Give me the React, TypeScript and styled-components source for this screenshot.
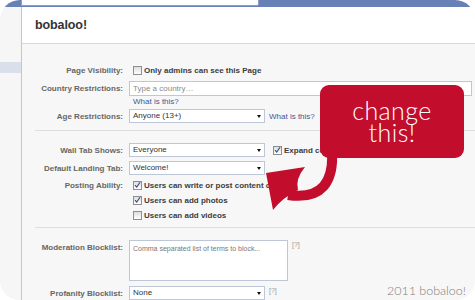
import React from 'react'
import styled, { createGlobalStyle } from 'styled-components'

const GlobalStyle = createGlobalStyle`
    body {
        margin: 0;
        background: #ffffff;
        font-family: "Liberation Sans", Arial, sans-serif;
    }
`;

const Frame = styled.div`
    position: relative;
    width: 475px;
    height: 300px;
    border-radius: 20px;
    overflow: hidden;
    background: #f7f7f7;
`;

const TopBar = styled.div`
    height: 7px;
    background: #6780b6;
    padding-left: 21px;
    display: flex;
`;

const SearchBox = styled.div`
    width: 236px;
    height: 7px;
    margin-top: -3px;
    background: #ffffff;
    border: 1px solid #8d9fc7;
    border-radius: 0 0 2px 0;
`;

const Main = styled.div`
    display: flex;
    height: 293px;
`;

const Sidebar = styled.div`
    width: 22px;
    flex: none;
    box-sizing: border-box;
    border-right: 1px solid #c6c6c6;
    background: #f6f6f6;
    padding-top: 55px;
`;

const NavItem = styled.div`
    height: 11px;
    background: #d9e0ec;
`;

const Content = styled.div`
    flex: 1;
    display: flex;
    flex-direction: column;
`;

const Header = styled.div`
    height: 40px;
    background: #ffffff;
    border-bottom: 1px solid #d8d8d8;
    display: flex;
    align-items: center;
    padding-left: 13px;
`;

const Title = styled.h1`
    margin: 0;
    font-size: 12.5px;
    font-weight: bold;
    color: #333333;
    letter-spacing: -0.1px;
`;

const Body = styled.div`
    flex: 1;
    background: #f7f7f7;
    padding-left: 13px;
`;

const Section = styled.div<{ $top: number; $bottom: number; $last?: boolean }>`
    display: flex;
    flex-direction: column;
    padding-top: ${p => p.$top}px;
    padding-bottom: ${p => p.$bottom}px;
    border-bottom: ${p => (p.$last ? 'none' : '1px solid #dedede')};
`;

const Row = styled.div<{ $top?: number; $align?: string }>`
    display: grid;
    grid-template-columns: 88px 1fr;
    column-gap: 6px;
    align-items: ${p => p.$align || 'center'};
    margin-top: ${p => p.$top || 0}px;
`;

const Label = styled.div<{ $offset?: number }>`
    text-align: right;
    font-size: 8px;
    line-height: 9px;
    font-weight: bold;
    color: #666666;
    white-space: nowrap;
    margin-top: ${p => p.$offset || 0}px;
`;

const Controls = styled.div`
    display: flex;
    align-items: center;
    gap: 4px;
    min-width: 0;
    white-space: nowrap;
`;

const Stack = styled.div`
    display: flex;
    flex-direction: column;
    gap: 1px;
`;

const CheckRow = styled.label`
    display: flex;
    align-items: center;
    height: 14px;
    gap: 2px;
    padding-left: 4px;
    font-size: 8px;
    font-weight: bold;
    color: #3c3c3c;
    white-space: nowrap;
`;

const Box = styled.span`
    width: 9px;
    height: 9px;
    box-sizing: border-box;
    border: 1px solid #8f8f8f;
    background: linear-gradient(#dedede, #ffffff);
    display: flex;
    align-items: center;
    justify-content: center;
    flex: none;
`;

const TextInput = styled.div`
    width: 343px;
    height: 15px;
    box-sizing: border-box;
    border: 1px solid #bdc7d8;
    background: #ffffff;
    padding-left: 3px;
    font-size: 8px;
    line-height: 13px;
    color: #8a8a8a;
`;

const Select = styled.div`
    position: relative;
    width: 136px;
    height: 14px;
    box-sizing: border-box;
    border: 1px solid #bdc7d8;
    background: #ffffff;
    padding-left: 3px;
    font-size: 8px;
    line-height: 12px;
    color: #333333;
    flex: none;
    &::after {
        content: '';
        position: absolute;
        right: 3px;
        top: 5px;
        border-left: 2.5px solid transparent;
        border-right: 2.5px solid transparent;
        border-top: 3px solid #111111;
    }
`;

const TextArea = styled.div`
    width: 159px;
    height: 41px;
    box-sizing: border-box;
    border: 1px solid #bdc7d8;
    background: #ffffff;
    padding: 4px 3px;
    font-size: 7px;
    color: #777777;
    flex: none;
    align-self: flex-start;
`;

const Link = styled.a`
    font-size: 8px;
    line-height: 9px;
    color: #3b5998;
    text-decoration: none;
`;

const LinkRow = styled.div`
    margin: 1px 0 0 98px;
    height: 9px;
    display: flex;
`;

const Help = styled.span`
    font-size: 7px;
    color: #9a9a9a;
    align-self: flex-start;
    margin-top: 1px;
`;

const Callout = styled.div`
    position: absolute;
    left: 320px;
    top: 85px;
    width: 144px;
    height: 73px;
    border-radius: 9px;
    background: #c30d2d;
    color: #ffffff;
    display: flex;
    align-items: center;
    justify-content: center;
    padding-bottom: 2px;
    box-sizing: border-box;
`;

const CalloutText = styled.span`
    font-family: Lato, "Open Sans", sans-serif;
    font-weight: 300;
    font-size: 25px;
    line-height: 22px;
    letter-spacing: 0.4px;
    text-align: center;
    white-space: pre-line;
`;

const Arrow = styled.svg`
    position: absolute;
    left: 260px;
    top: 150px;
`;

const Credit = styled.div`
    position: absolute;
    right: 9px;
    bottom: 2px;
    font-family: Lato, "Open Sans", sans-serif;
    font-weight: 300;
    font-size: 12.5px;
    color: #808080;
`;

const Check: React.FC<{ checked?: boolean }> = ({ checked }) => (
    <Box>
        {checked && (
            <svg width="8" height="8" viewBox="0 0 8 8">
                <path d="M1.2 4.2 L3.1 6.4 L6.9 0.8" fill="none" stroke="#34508a" strokeWidth="1.3" />
            </svg>
        )}
    </Box>
)

const App: React.FC = () => {
    return (
        <Frame>
            <GlobalStyle />
            <TopBar>
                <SearchBox />
            </TopBar>
            <Main>
                <Sidebar>
                    <NavItem />
                </Sidebar>
                <Content>
                    <Header>
                        <Title>bobaloo!</Title>
                    </Header>
                    <Body>
                        <Section $top={19} $bottom={7}>
                            <Row>
                                <Label>Page Visibility:</Label>
                                <CheckRow>
                                    <Check /> Only admins can see this Page
                                </CheckRow>
                            </Row>
                            <Row $top={4}>
                                <Label>Country Restrictions:</Label>
                                <TextInput>Type a country…</TextInput>
                            </Row>
                            <LinkRow>
                                <Link href="#">What is this?</Link>
                            </LinkRow>
                            <Row $top={3}>
                                <Label>Age Restrictions:</Label>
                                <Controls>
                                    <Select>Anyone (13+)</Select>
                                    <Link href="#">What is this?</Link>
                                </Controls>
                            </Row>
                        </Section>
                        <Section $top={12} $bottom={5}>
                            <Row>
                                <Label>Wall Tab Shows:</Label>
                                <Controls>
                                    <Select>Everyone</Select>
                                    <CheckRow>
                                        <Check checked /> Expand comments
                                    </CheckRow>
                                </Controls>
                            </Row>
                            <Row $top={4}>
                                <Label>Default Landing Tab:</Label>
                                <Controls>
                                    <Select>Welcome!</Select>
                                </Controls>
                            </Row>
                            <Row $top={3} $align="start">
                                <Label $offset={3}>Posting Ability:</Label>
                                <Stack>
                                    <CheckRow>
                                        <Check checked /> Users can write or post content on
                                    </CheckRow>
                                    <CheckRow>
                                        <Check checked /> Users can add photos
                                    </CheckRow>
                                    <CheckRow>
                                        <Check /> Users can add videos
                                    </CheckRow>
                                </Stack>
                            </Row>
                        </Section>
                        <Section $top={12} $bottom={0} $last>
                            <Row $align="start">
                                <Label $offset={3}>Moderation Blocklist:</Label>
                                <Controls>
                                    <TextArea>Comma separated list of terms to block...</TextArea>
                                    <Help>[?]</Help>
                                </Controls>
                            </Row>
                            <Row $top={5}>
                                <Label>Profanity Blocklist:</Label>
                                <Controls>
                                    <Select>None</Select>
                                    <Help>[?]</Help>
                                </Controls>
                            </Row>
                        </Section>
                    </Body>
                </Content>
            </Main>
            <Callout>
                <CalloutText>{'change\nthis!'}</CalloutText>
            </Callout>
            <Arrow width="90" height="65" viewBox="0 0 90 65">
                <path d="M72 0 C74 32 62 50 28 45" fill="none" stroke="#c30d2d" strokeWidth="10" />
                <path d="M6 23 L45 17 Q35 29 38 40 Q22 48 13 60 Z" fill="#c30d2d" />
            </Arrow>
            <Credit>2011 bobaloo!</Credit>
        </Frame>
    )
}

export default App
